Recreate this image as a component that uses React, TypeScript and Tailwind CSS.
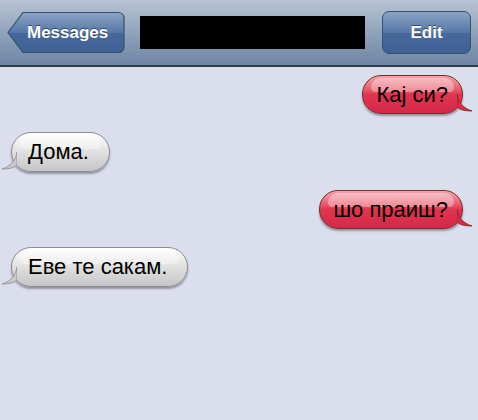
import React from 'react';

type Msg = { text: string; mine: boolean };

const MESSAGES: Msg[] = [
  { text: 'Кај си?', mine: true },
  { text: 'Дома.', mine: false },
  { text: 'шо праиш?', mine: true },
  { text: 'Еве те сакам.', mine: false },
];

function Tail({ mine }: { mine: boolean }) {
  const fill = mine ? '#d92b48' : '#c9c9c9';
  const stroke = mine ? '#7a2a1c' : '#8d8d8d';
  return (
    <svg
      width="16"
      height="18"
      viewBox="0 0 16 18"
      className={mine ? 'absolute -right-[11px] bottom-[1px]' : 'absolute -left-[11px] bottom-[1px] -scale-x-100'}
    >
      <path d="M0 0 C1 8 6 14 15 17 C8 17 3 16 0 13 Z" fill={fill} stroke={stroke} strokeWidth="0.8" />
    </svg>
  );
}

function Bubble({ text, mine }: Msg) {
  return (
    <div className={mine ? 'flex justify-end pr-[15px]' : 'flex justify-start pl-[11px]'}>
      <div
        className={
          mine
            ? 'relative h-[39px] rounded-[19px] border border-[#7d2d1f] bg-gradient-to-b from-[#f4a3ad] via-[#e0344f] to-[#d5294a] pl-[13px] pr-[14px] flex items-center shadow-[0_2px_2px_rgba(60,60,80,0.45)]'
            : 'relative h-[40px] rounded-[20px] border border-[#8c8c8c] bg-gradient-to-b from-[#ffffff] via-[#e0e0e0] to-[#c6c6c6] pl-[16px] pr-[20px] flex items-center shadow-[0_2px_2px_rgba(60,60,80,0.45)]'
        }
      >
        <div className="absolute left-[8px] right-[8px] top-[2px] h-[14px] rounded-t-[14px] rounded-b-[6px] bg-white/35" />
        <span className="relative text-[22px] leading-none text-black font-['Liberation_Sans',Arial,sans-serif]">
          {text}
        </span>
        <Tail mine={mine} />
      </div>
    </div>
  );
}

export default function App() {
  return (
    <div className="w-[478px] h-[420px] overflow-hidden bg-[#dbdeed] font-['Liberation_Sans',Arial,sans-serif]">
      {/* Nav bar */}
      <div className="h-[67px] border-b-2 border-[#2d3a4c] bg-gradient-to-b from-[#b8c4d3] via-[#91a3bb] to-[#6e85a3] flex items-center px-[7px] gap-[15px]">
        <div className="relative h-[43px] w-[118px] flex items-center">
          <svg width="118" height="43" viewBox="0 0 118 43" className="absolute inset-0">
            <defs>
              <linearGradient id="btn" x1="0" y1="0" x2="0" y2="1">
                <stop offset="0" stopColor="#8da4c6" />
                <stop offset="0.5" stopColor="#5577a6" />
                <stop offset="0.51" stopColor="#46689a" />
                <stop offset="1" stopColor="#3f6196" />
              </linearGradient>
            </defs>
            <path
              d="M1 21.5 L16 1.5 H111 Q117 1.5 117 7.5 V35.5 Q117 41.5 111 41.5 H16 Z"
              fill="url(#btn)"
              stroke="#34506f"
              strokeWidth="1.2"
            />
          </svg>
          <span className="relative pl-[20px] text-[17px] font-bold text-white [text-shadow:0_-1px_0_rgba(0,0,0,0.45)]">
            Messages
          </span>
        </div>
        <div className="h-[33px] w-[225px] bg-black" />
        <div className="ml-auto h-[43px] w-[89px] rounded-[7px] border border-[#34506f] bg-[linear-gradient(to_bottom,#8da4c6,#5577a6_50%,#46689a_51%,#3f6196)] flex items-center justify-center">
          <span className="text-[17px] font-bold text-white [text-shadow:0_-1px_0_rgba(0,0,0,0.45)]">Edit</span>
        </div>
      </div>

      {/* Conversation */}
      <div className="flex flex-col gap-[18px] pt-[8px]">
        {MESSAGES.map((m, i) => (
          <Bubble key={i} text={m.text} mine={m.mine} />
        ))}
      </div>
    </div>
  );
}
